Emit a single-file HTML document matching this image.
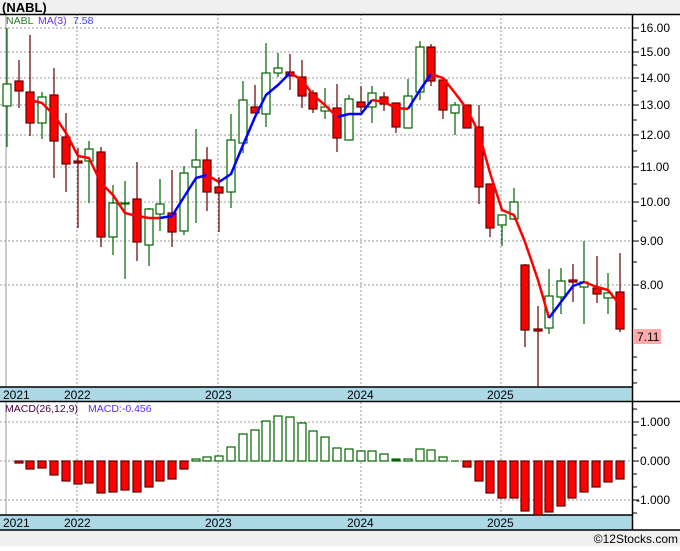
<!DOCTYPE html>
<html><head><meta charset="utf-8"><style>
body{margin:0;background:#fff;width:680px;height:546px;overflow:hidden;font-family:"Liberation Sans",sans-serif}
svg text{font-family:"Liberation Sans",sans-serif}
</style></head><body>
<svg width="680" height="546" xmlns="http://www.w3.org/2000/svg">
<rect x="0" y="0" width="680" height="14" fill="#f0f0f0"/>
<text x="2" y="12" font-size="13" font-weight="bold" fill="#000">(NABL)</text>
<rect x="0" y="530" width="680" height="16" fill="#f0f0f0"/>
<text x="678" y="543" font-size="12" text-anchor="end" fill="#000">©12Stocks.com</text>
<!-- grids -->
<g stroke="#999" stroke-width="1" stroke-dasharray="2,2">
<line x1="0" y1="28" x2="632" y2="28"/><line x1="0" y1="52" x2="632" y2="52"/><line x1="0" y1="78" x2="632" y2="78"/><line x1="0" y1="105" x2="632" y2="105"/><line x1="0" y1="135" x2="632" y2="135"/><line x1="0" y1="167" x2="632" y2="167"/><line x1="0" y1="202" x2="632" y2="202"/><line x1="0" y1="241" x2="632" y2="241"/><line x1="0" y1="285" x2="632" y2="285"/>
<line x1="0" y1="422" x2="632" y2="422"/><line x1="0" y1="461" x2="632" y2="461"/><line x1="0" y1="500" x2="632" y2="500"/>
<line x1="77" y1="14" x2="77" y2="387"/><line x1="218" y1="14" x2="218" y2="387"/><line x1="361" y1="14" x2="361" y2="387"/><line x1="501" y1="14" x2="501" y2="387"/>
<line x1="77" y1="402" x2="77" y2="515"/><line x1="218" y1="402" x2="218" y2="515"/><line x1="361" y1="402" x2="361" y2="515"/><line x1="501" y1="402" x2="501" y2="515"/>
</g>
<line x1="6" y1="14" x2="6" y2="387" stroke="#999"/>
<line x1="6" y1="402" x2="6" y2="515" stroke="#999"/>
<!-- date bands -->
<rect x="0" y="387" width="632" height="14" fill="#add8e6"/>
<rect x="0" y="515" width="632" height="15" fill="#add8e6"/>
<g stroke="#000" stroke-width="1.5">
<line x1="0" y1="14.5" x2="680" y2="14.5"/>
<line x1="0" y1="387" x2="632" y2="387"/><line x1="0" y1="401.5" x2="680" y2="401.5"/>
<line x1="0" y1="515" x2="632" y2="515"/><line x1="0" y1="530" x2="680" y2="530"/>
<line x1="632.5" y1="14" x2="632.5" y2="530"/>
</g>
<g font-size="12" fill="#000">
<text x="3" y="399">2021</text><text x="64" y="399">2022</text><text x="205" y="399">2023</text><text x="347" y="399">2024</text><text x="487" y="399">2025</text>
<text x="3" y="527">2021</text><text x="64" y="527">2022</text><text x="205" y="527">2023</text><text x="347" y="527">2024</text><text x="487" y="527">2025</text>
</g>
<!-- right axis -->
<g stroke="#000" stroke-width="1">
<line x1="633" y1="28" x2="639" y2="28"/><line x1="633" y1="40" x2="637" y2="40"/><line x1="633" y1="52" x2="639" y2="52"/><line x1="633" y1="65" x2="637" y2="65"/><line x1="633" y1="78" x2="639" y2="78"/><line x1="633" y1="91" x2="637" y2="91"/><line x1="633" y1="105" x2="639" y2="105"/><line x1="633" y1="120" x2="637" y2="120"/><line x1="633" y1="135" x2="639" y2="135"/><line x1="633" y1="151" x2="637" y2="151"/><line x1="633" y1="167" x2="639" y2="167"/><line x1="633" y1="184" x2="637" y2="184"/><line x1="633" y1="202" x2="639" y2="202"/><line x1="633" y1="221" x2="637" y2="221"/><line x1="633" y1="241" x2="639" y2="241"/><line x1="633" y1="262" x2="637" y2="262"/><line x1="633" y1="285" x2="639" y2="285"/><line x1="633" y1="309" x2="637" y2="309"/><line x1="633" y1="335" x2="639" y2="335"/><line x1="633" y1="357" x2="637" y2="357"/><line x1="633" y1="370" x2="637" y2="370"/><line x1="633" y1="383" x2="637" y2="383"/>
<line x1="633" y1="409" x2="637" y2="409"/><line x1="633" y1="422" x2="639" y2="422"/><line x1="633" y1="435" x2="637" y2="435"/><line x1="633" y1="448" x2="637" y2="448"/><line x1="633" y1="461" x2="639" y2="461"/><line x1="633" y1="474" x2="637" y2="474"/><line x1="633" y1="487" x2="637" y2="487"/><line x1="633" y1="500" x2="639" y2="500"/><line x1="633" y1="513" x2="637" y2="513"/>
</g>
<g font-size="12" fill="#000">
<text x="640" y="32">16.00</text><text x="640" y="56">15.00</text><text x="640" y="82">14.00</text><text x="640" y="109">13.00</text><text x="640" y="139">12.00</text><text x="640" y="171">11.00</text><text x="640" y="206">10.00</text><text x="640" y="245">9.00</text><text x="640" y="289">8.00</text>
<text x="640" y="426">1.000</text><text x="640" y="465">0.000</text><text x="636" y="504">-1.000</text>
</g>
<rect x="633" y="329" width="28" height="15" fill="#ffaaaa"/>
<text x="637" y="341" font-size="12" fill="#000">7.11</text>
<!-- legends -->
<text x="6" y="24" font-size="10.5" fill="#2a7a2a">NABL</text>
<text x="38" y="24" font-size="10.5" fill="#6a2aff">MA(3)</text>
<text x="73" y="24" font-size="10.5" fill="#3a3aff">7.58</text>
<text x="5" y="412" font-size="10.5" fill="#400040">MACD(26,12,9)</text>
<text x="88" y="412" font-size="10.5" fill="#5a2aff">MACD:-0.456</text>
<!-- candles -->
<g stroke-width="1.2">
<g stroke="#006400" fill="#fff">
<line x1="7" y1="28" x2="7" y2="147"/><rect x="3" y="84" width="8" height="22"/>
<line x1="42" y1="92" x2="42" y2="139"/><rect x="38" y="97" width="8" height="26"/>
<line x1="89" y1="141" x2="89" y2="203"/><rect x="85" y="149" width="8" height="12"/>
<line x1="113" y1="185" x2="113" y2="255"/><rect x="109" y="203" width="8" height="34"/>
<line x1="125" y1="181" x2="125" y2="279"/><rect x="121" y="203" width="8" height="1"/>
<line x1="149" y1="208" x2="149" y2="266"/><rect x="145" y="209" width="8" height="36"/>
<line x1="160" y1="179" x2="160" y2="231"/><rect x="156" y="204" width="8" height="10"/>
<line x1="184" y1="166" x2="184" y2="235"/><rect x="180" y="173" width="8" height="58"/>
<line x1="196" y1="129" x2="196" y2="223"/><rect x="192" y="160" width="8" height="7"/>
<line x1="231" y1="114" x2="231" y2="208"/><rect x="227" y="140" width="8" height="52"/>
<line x1="243" y1="81" x2="243" y2="153"/><rect x="239" y="100" width="8" height="43"/>
<line x1="266" y1="43" x2="266" y2="127"/><rect x="262" y="73" width="8" height="41"/>
<line x1="278" y1="53" x2="278" y2="77"/><rect x="274" y="68" width="8" height="5"/>
<line x1="325" y1="88" x2="325" y2="119"/><rect x="321" y="107" width="8" height="4"/>
<line x1="349" y1="95" x2="349" y2="140"/><rect x="345" y="99" width="8" height="41"/>
<line x1="372" y1="86" x2="372" y2="123"/><rect x="368" y="93" width="8" height="14"/>
<line x1="408" y1="79" x2="408" y2="128"/><rect x="404" y="96" width="8" height="32"/>
<line x1="420" y1="41" x2="420" y2="100"/><rect x="416" y="47" width="8" height="45"/>
<line x1="455" y1="102" x2="455" y2="135"/><rect x="451" y="105" width="8" height="8"/>
<line x1="502" y1="215" x2="502" y2="246"/><rect x="498" y="215" width="8" height="10"/>
<line x1="514" y1="188" x2="514" y2="220"/><rect x="510" y="202" width="8" height="17"/>
<line x1="549" y1="269" x2="549" y2="334"/><rect x="545" y="296" width="8" height="32"/>
<line x1="561" y1="268" x2="561" y2="314"/><rect x="557" y="281" width="8" height="16"/>
<line x1="584" y1="241" x2="584" y2="324"/><rect x="580" y="282" width="8" height="5"/>
<line x1="608" y1="273" x2="608" y2="314"/><rect x="604" y="293" width="8" height="5"/>
</g>
<g stroke="#600000" fill="#ff0000">
<line x1="19" y1="60" x2="19" y2="108"/><rect x="15" y="81" width="8" height="10"/>
<line x1="30" y1="35" x2="30" y2="136"/><rect x="26" y="92" width="8" height="31"/>
<line x1="54" y1="68" x2="54" y2="178"/><rect x="50" y="95" width="8" height="46"/>
<line x1="66" y1="113" x2="66" y2="192"/><rect x="62" y="137" width="8" height="27"/>
<line x1="78" y1="148" x2="78" y2="228"/><rect x="74" y="161" width="8" height="2"/>
<line x1="101" y1="147" x2="101" y2="247"/><rect x="97" y="152" width="8" height="85"/>
<line x1="137" y1="162" x2="137" y2="261"/><rect x="133" y="199" width="8" height="43"/>
<line x1="172" y1="170" x2="172" y2="247"/><rect x="168" y="213" width="8" height="19"/>
<line x1="207" y1="147" x2="207" y2="211"/><rect x="203" y="160" width="8" height="32"/>
<line x1="219" y1="177" x2="219" y2="232"/><rect x="215" y="187" width="8" height="6"/>
<line x1="255" y1="85" x2="255" y2="113"/><rect x="251" y="107" width="8" height="6"/>
<line x1="290" y1="54" x2="290" y2="90"/><rect x="286" y="72" width="8" height="4"/>
<line x1="302" y1="60" x2="302" y2="108"/><rect x="298" y="77" width="8" height="19"/>
<line x1="313" y1="90" x2="313" y2="113"/><rect x="309" y="93" width="8" height="16"/>
<line x1="337" y1="84" x2="337" y2="152"/><rect x="333" y="108" width="8" height="30"/>
<line x1="361" y1="86" x2="361" y2="112"/><rect x="357" y="102" width="8" height="5"/>
<line x1="384" y1="92" x2="384" y2="111"/><rect x="380" y="97" width="8" height="7"/>
<line x1="396" y1="103" x2="396" y2="133"/><rect x="392" y="103" width="8" height="24"/>
<line x1="431" y1="44" x2="431" y2="86"/><rect x="427" y="47" width="8" height="34"/>
<line x1="443" y1="77" x2="443" y2="119"/><rect x="439" y="80" width="8" height="30"/>
<line x1="467" y1="105" x2="467" y2="128"/><rect x="463" y="105" width="8" height="23"/>
<line x1="479" y1="105" x2="479" y2="204"/><rect x="475" y="127" width="8" height="60"/>
<line x1="490" y1="184" x2="490" y2="237"/><rect x="486" y="184" width="8" height="44"/>
<line x1="525" y1="264" x2="525" y2="347"/><rect x="521" y="265" width="8" height="65"/>
<line x1="538" y1="306" x2="538" y2="387"/><rect x="534" y="329" width="8" height="2"/>
<line x1="573" y1="264" x2="573" y2="302"/><rect x="569" y="280" width="8" height="2"/>
<line x1="597" y1="256" x2="597" y2="303"/><rect x="593" y="288" width="8" height="6"/>
<line x1="620" y1="253" x2="620" y2="332"/><rect x="616" y="292" width="8" height="37"/>
</g>
</g>
<!-- MA -->
<g fill="none" stroke-width="2.5" stroke-linejoin="round">
<polyline stroke="#ff0000" points="30,100 42,103 54,115 66,133 78,156 89,158 101,183 113,195 125,213 137,216 149,218 160,218"/>
<polyline stroke="#0000ff" points="160,218 172,216 184,197 196,178 207,175"/>
<polyline stroke="#ff0000" points="207,175 219,182"/>
<polyline stroke="#0000ff" points="219,182 231,174 243,145 255,117 266,95 278,85 290,73"/>
<polyline stroke="#ff0000" points="290,73 302,80 313,95 325,105 337,117"/>
<polyline stroke="#0000ff" points="337,117 349,114 361,114 372,100"/>
<polyline stroke="#ff0000" points="372,100 384,102 396,108 408,109"/>
<polyline stroke="#0000ff" points="408,109 420,90 431,74"/>
<polyline stroke="#ff0000" points="431,74 443,78 455,93 467,109 479,133 490,173 502,210 514,215 525,242 538,280 549,318"/>
<polyline stroke="#0000ff" points="549,318 561,302 573,286 584,282"/>
<polyline stroke="#ff0000" points="584,282 597,287 608,290 620,305"/>
</g>
<!-- MACD bars -->
<g stroke="#600000" fill="#ff0000" stroke-width="1.2">
<rect x="15" y="461" width="8" height="2"/><rect x="26" y="461" width="8" height="8"/><rect x="38" y="461" width="8" height="7"/><rect x="50" y="461" width="8" height="14"/><rect x="62" y="461" width="8" height="20"/><rect x="74" y="461" width="8" height="23"/><rect x="85" y="461" width="8" height="22"/><rect x="97" y="461" width="8" height="32"/><rect x="109" y="461" width="8" height="31"/><rect x="121" y="461" width="8" height="29"/><rect x="133" y="461" width="8" height="31"/><rect x="145" y="461" width="8" height="26"/><rect x="156" y="461" width="8" height="20"/><rect x="168" y="461" width="8" height="18"/><rect x="180" y="461" width="8" height="8"/>
<rect x="463" y="461" width="8" height="6"/><rect x="475" y="461" width="8" height="20"/><rect x="486" y="461" width="8" height="32"/><rect x="498" y="461" width="8" height="37"/><rect x="510" y="461" width="8" height="37"/><rect x="521" y="461" width="8" height="50"/><rect x="534" y="461" width="8" height="54"/><rect x="545" y="461" width="8" height="51"/><rect x="557" y="461" width="8" height="45"/><rect x="568" y="461" width="8" height="37"/><rect x="580" y="461" width="8" height="31"/><rect x="592" y="461" width="8" height="26"/><rect x="604" y="461" width="8" height="21"/><rect x="616" y="461" width="8" height="18"/>
</g>
<g stroke="#006400" fill="#fff" stroke-width="1.2">
<rect x="192" y="459" width="8" height="2"/><rect x="203" y="457" width="8" height="4"/><rect x="215" y="456" width="8" height="5"/><rect x="227" y="447" width="8" height="14"/><rect x="239" y="434" width="8" height="27"/><rect x="251" y="430" width="8" height="31"/><rect x="262" y="421" width="8" height="40"/><rect x="274" y="416" width="8" height="45"/><rect x="286" y="417" width="8" height="44"/><rect x="298" y="423" width="8" height="38"/><rect x="309" y="431" width="8" height="30"/><rect x="321" y="437" width="8" height="24"/><rect x="333" y="448" width="8" height="13"/><rect x="345" y="449" width="8" height="12"/><rect x="357" y="451" width="8" height="10"/><rect x="368" y="451" width="8" height="10"/><rect x="380" y="454" width="8" height="7"/><rect x="392" y="459" width="8" height="2" fill="#006400"/><rect x="404" y="459" width="8" height="2"/><rect x="416" y="449" width="8" height="12"/><rect x="427" y="450" width="8" height="11"/><rect x="439" y="457" width="8" height="4"/><line x1="451" y1="461" x2="459" y2="461"/>
</g>
</svg>
</body></html>
